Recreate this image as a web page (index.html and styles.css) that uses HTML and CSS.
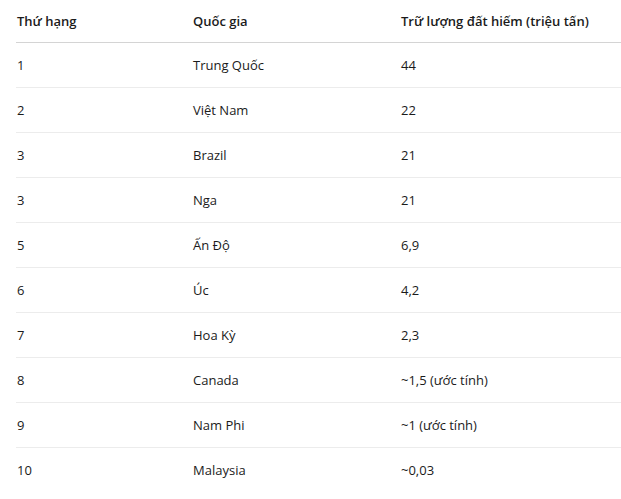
FILE: index.html
```html
<!DOCTYPE html>
<html lang="vi">
<head>
<meta charset="utf-8">
<link rel="stylesheet" href="styles.css">
</head>
<body>
<table class="tbl">
  <thead>
    <tr><th class="c1">Thứ hạng</th><th class="c2">Quốc gia</th><th class="c3">Trữ lượng đất hiếm (triệu tấn)</th></tr>
  </thead>
  <tbody>
    <tr><td>1</td><td>Trung Quốc</td><td>44</td></tr>
    <tr><td>2</td><td>Việt Nam</td><td>22</td></tr>
    <tr><td>3</td><td>Brazil</td><td>21</td></tr>
    <tr><td>3</td><td>Nga</td><td>21</td></tr>
    <tr><td>5</td><td>Ấn Độ</td><td>6,9</td></tr>
    <tr><td>6</td><td>Úc</td><td>4,2</td></tr>
    <tr><td>7</td><td>Hoa Kỳ</td><td>2,3</td></tr>
    <tr><td>8</td><td>Canada</td><td>~1,5 (ước tính)</td></tr>
    <tr><td>9</td><td>Nam Phi</td><td>~1 (ước tính)</td></tr>
    <tr class="last"><td>10</td><td>Malaysia</td><td>~0,03</td></tr>
  </tbody>
</table>
</body>
</html>
```
FILE: styles.css
```css
html, body {
  margin: 0;
  padding: 0;
  background: #ffffff;
}
.tbl {
  margin-left: 16px;
  width: 605px;
  border-collapse: collapse;
  font-family: "Open Sans", "Noto Sans", sans-serif;
  font-size: 13px;
  color: #1b1b1b;
  table-layout: fixed;
}
.tbl th {
  font-weight: 600;
  text-align: left;
  height: 42px;
  padding: 0 0 0 1px;
  border-bottom: 1px solid #d4d4d4;
  vertical-align: middle;
}
.tbl .c1 { width: 175px; }
.tbl .c2 { width: 207px; }
.tbl td {
  height: 44px;
  padding: 0 0 0 1px;
  border-bottom: 1px solid #ececec;
  vertical-align: middle;
}
.tbl tr.last td { border-bottom: none; }
```
